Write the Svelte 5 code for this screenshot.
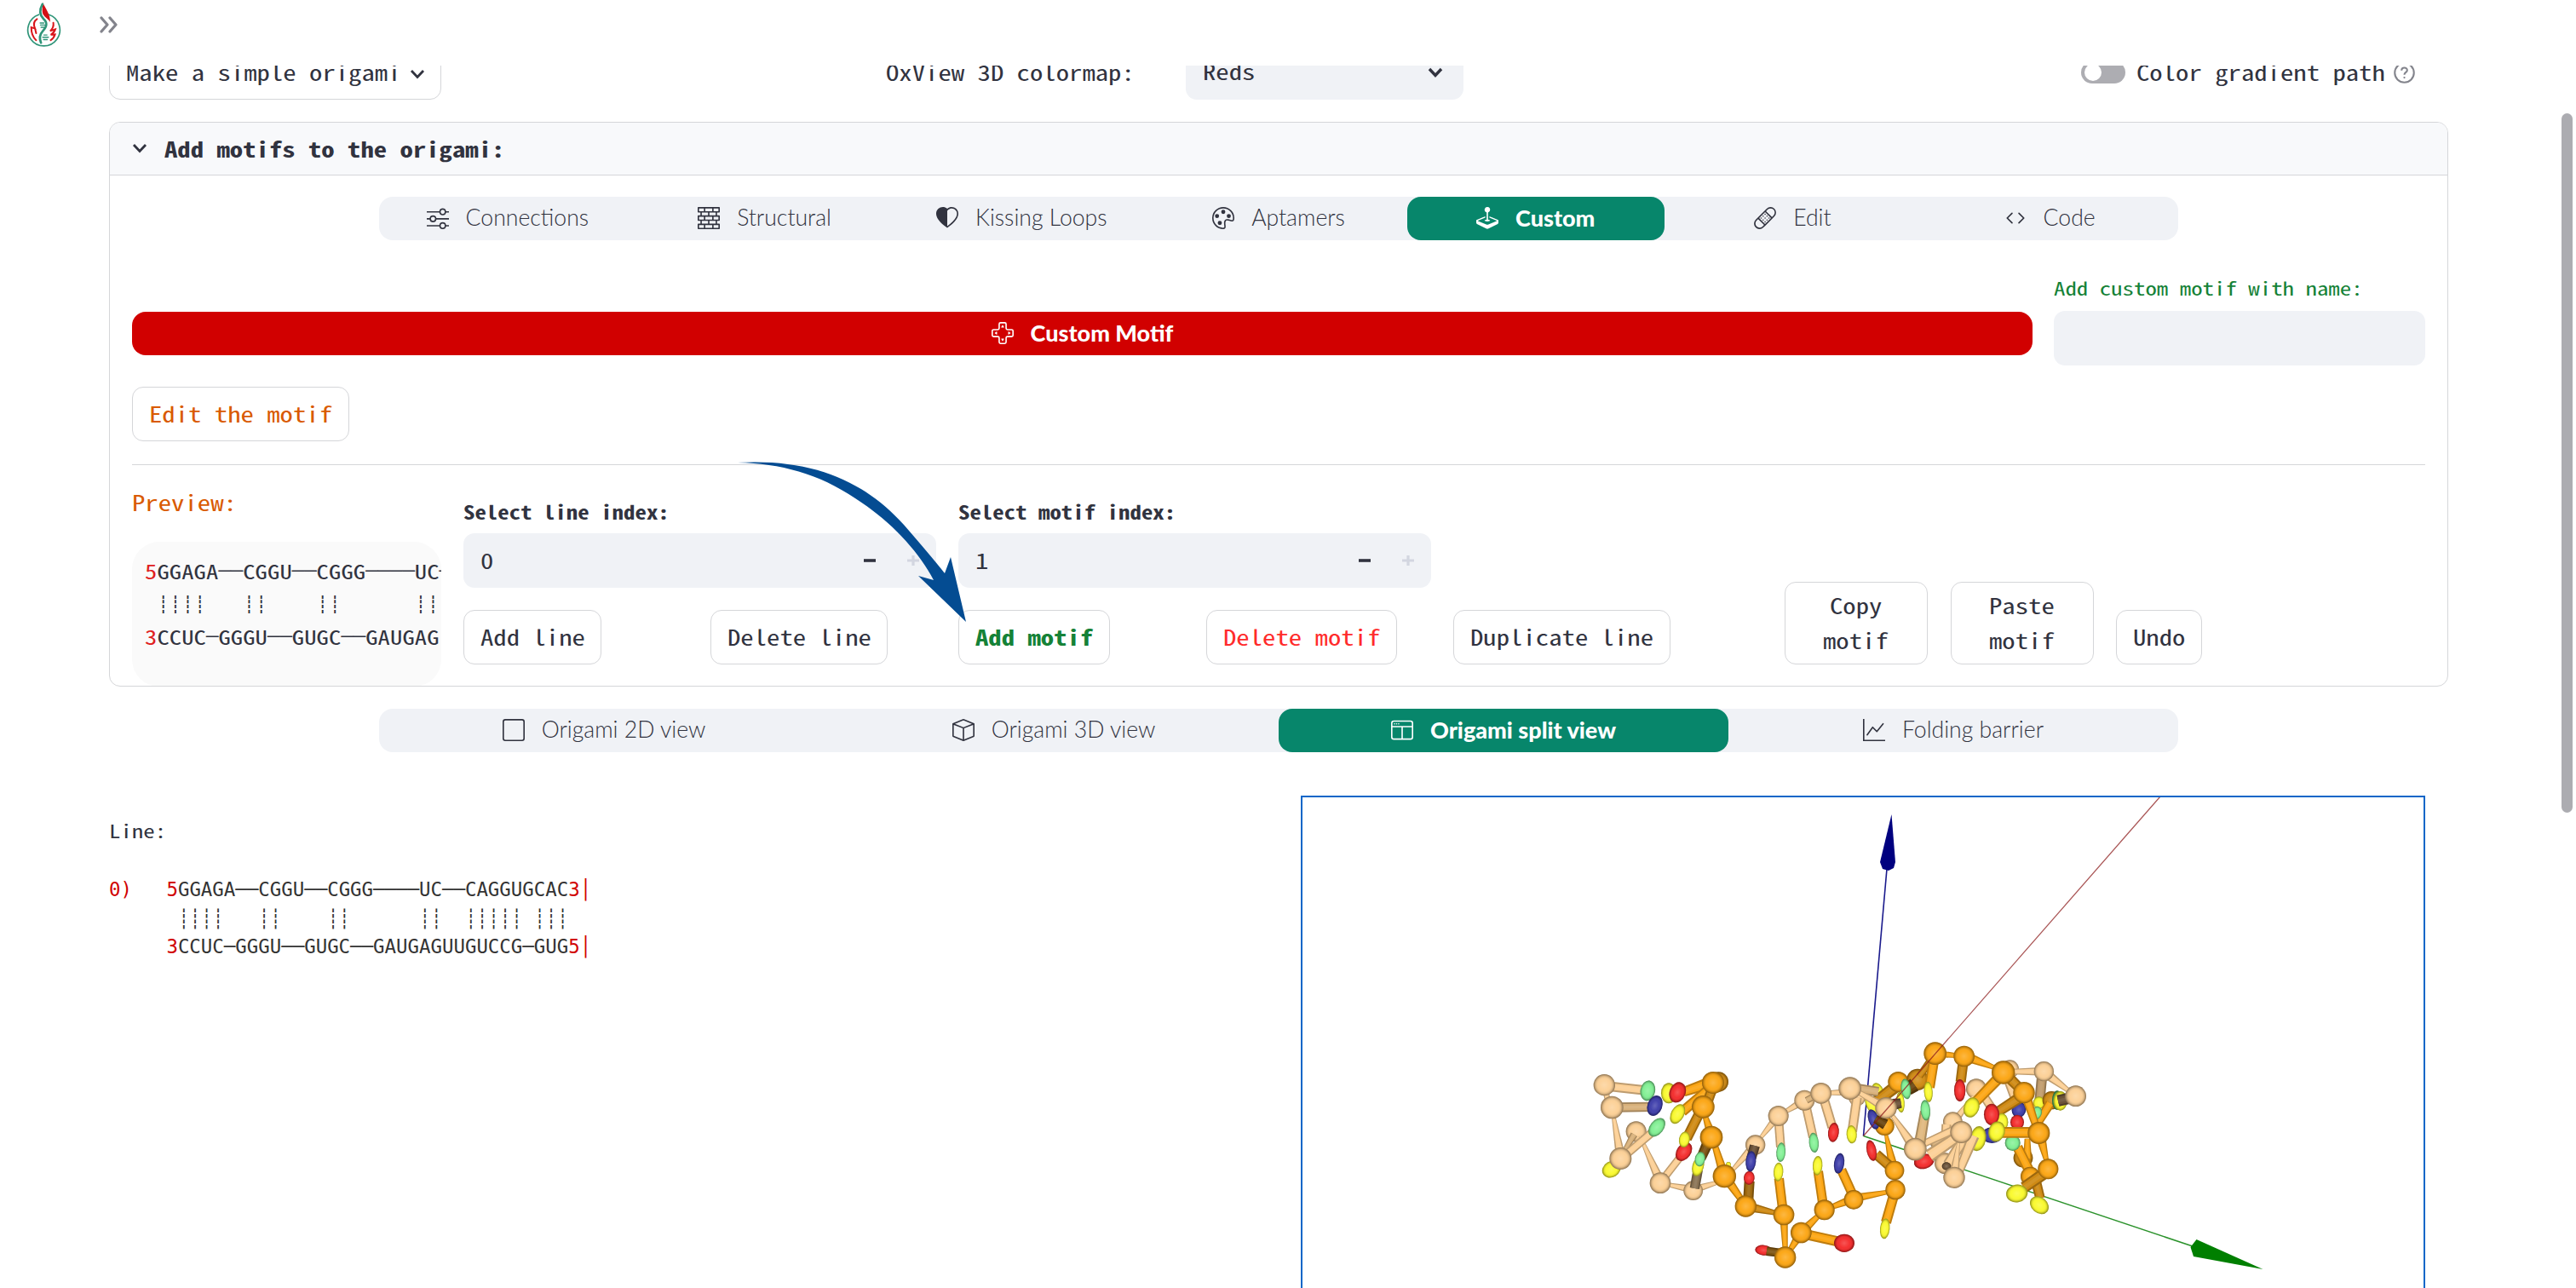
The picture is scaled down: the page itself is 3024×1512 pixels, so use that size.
<script>
  const icons = {
    sliders: ['M11.5 2a1.5 1.5 0 1 0 0 3 1.5 1.5 0 0 0 0-3M9.05 3a2.5 2.5 0 0 1 4.9 0H16v1h-2.05a2.5 2.5 0 0 1-4.9 0H0V3zM4.5 7a1.5 1.5 0 1 0 0 3 1.5 1.5 0 0 0 0-3M2.05 8a2.5 2.5 0 0 1 4.9 0H16v1H6.95a2.5 2.5 0 0 1-4.9 0H0V8zm9.45 4a1.5 1.5 0 1 0 0 3 1.5 1.5 0 0 0 0-3m-2.45 1a2.5 2.5 0 0 1 4.9 0H16v1h-2.05a2.5 2.5 0 0 1-4.9 0H0v-1z'],
    bricks: ['M0 .5A.5.5 0 0 1 .5 0h15a.5.5 0 0 1 .5.5v3a.5.5 0 0 1-.5.5H14v2h1.5a.5.5 0 0 1 .5.5v3a.5.5 0 0 1-.5.5H14v2h1.5a.5.5 0 0 1 .5.5v3a.5.5 0 0 1-.5.5H.5a.5.5 0 0 1-.5-.5v-3a.5.5 0 0 1 .5-.5H2v-2H.5a.5.5 0 0 1-.5-.5v-3A.5.5 0 0 1 .5 6H2V4H.5a.5.5 0 0 1-.5-.5zM3 4v2h4.5V4zm5.5 0v2H13V4zM3 10v2h4.5v-2zm5.5 0v2H13v-2zM1 1v2h3.5V1zm4.5 0v2h5V1zm6 0v2H15V1zM1 7v2h3.5V7zm4.5 0v2h5V7zm6 0v2H15V7zM1 13v2h3.5v-2zm4.5 0v2h5v-2zm6 0v2H15v-2z'],
    heart: ['M8 2.748v11.047c3.452-2.368 5.365-4.542 6.286-6.357.955-1.886.838-3.362.314-4.385C13.486.878 10.4.28 8.717 2.01zM8 15C-7.333 4.868 3.279-3.04 7.824 1.143q.09.083.176.171a3 3 0 0 1 .176-.17C12.72-3.042 23.333 4.867 8 15'],
    palette: ['M8 5a1.5 1.5 0 1 0 0-3 1.5 1.5 0 0 0 0 3m4 3a1.5 1.5 0 1 0 0-3 1.5 1.5 0 0 0 0 3M5 6.5a1.5 1.5 0 1 1-3 0 1.5 1.5 0 0 1 3 0m.5 6.5a1.5 1.5 0 1 0 0-3 1.5 1.5 0 0 0 0 3', 'M16 8c0 3.15-1.866 2.585-3.567 2.07C11.42 9.763 10.465 9.473 10 10c-.603.683-.475 1.819-.351 2.92C9.826 14.495 9.996 16 8 16a8 8 0 1 1 8-8m-8 7c.611 0 .654-.171.655-.176.078-.146.124-.464.07-1.119-.014-.168-.037-.37-.061-.591-.052-.464-.112-1.005-.118-1.462-.01-.707.083-1.61.704-2.314.369-.417.845-.578 1.272-.618.404-.038.812.026 1.16.104.343.077.702.186 1.025.284l.028.008c.346.105.658.199.953.266.653.148.904.083.991.024C14.717 9.38 15 9.161 15 8a7 7 0 1 0-7 7'],
    joystick: ['M10 2a2 2 0 0 1-1.5 1.937v5.087c.863.083 1.5.377 1.5.726 0 .414-.895.75-2 .75s-2-.336-2-.75c0-.35.637-.643 1.5-.726V3.937A2 2 0 1 1 10 2', 'M0 9.665v1.717a1 1 0 0 0 .553.894l6.553 3.277a2 2 0 0 0 1.788 0l6.553-3.277a1 1 0 0 0 .553-.894V9.665c0-.1-.06-.19-.152-.23L9.5 6.715v.993l5.227 2.178a.125.125 0 0 1 .001.23l-5.94 2.546a2 2 0 0 1-1.576 0l-5.94-2.546a.125.125 0 0 1 .001-.23L6.5 7.708l-.013-.988L.152 9.435a.25.25 0 0 0-.152.23'],
    bandaid: ['M14.121 1.879a3 3 0 0 0-4.242 0L8.733 3.026l4.261 4.26 1.127-1.165a3 3 0 0 0 0-4.242M12.293 8 8.027 3.734 3.738 8.031 8 12.293zm-5.006 4.994L3.03 8.737 1.879 9.88a3 3 0 0 0 4.241 4.24l.006-.006 1.16-1.121ZM2.679 7.676l6.492-6.504a4 4 0 0 1 5.66 5.653l-1.477 1.529-5.006 5.006-1.523 1.472a4 4 0 0 1-5.653-5.66l.001-.002 1.505-1.492z', ...[[5.2, 8], [6.62, 6.6], [8.03, 5.2], [6.62, 9.4], [8.03, 8], [9.45, 6.6], [8.03, 10.8], [9.45, 9.4], [10.86, 8]].map(([x, y]) => `M${x - 0.5} ${y}a.5.5 0 1 0 1 0 .5.5 0 1 0-1 0`)],
    code: ['M5.854 4.854a.5.5 0 1 0-.708-.708l-3.5 3.5a.5.5 0 0 0 0 .708l3.5 3.5a.5.5 0 0 0 .708-.708L2.707 8zm4.292 0a.5.5 0 0 1 .708-.708l3.5 3.5a.5.5 0 0 1 0 .708l-3.5 3.5a.5.5 0 0 1-.708-.708L13.293 8z'],
    box: ['M8.186 1.113a.5.5 0 0 0-.372 0L1.846 3.5 8 5.961 14.154 3.5zM15 4.239l-6.5 2.6v7.922l6.5-2.6V4.24zM7.5 14.762V6.838L1 4.239v7.923zM7.443.184a1.5 1.5 0 0 1 1.114 0l7.129 2.852A.5.5 0 0 1 16 3.5v8.662a1 1 0 0 1-.629.928l-7.185 2.874a.5.5 0 0 1-.372 0L.63 13.09a1 1 0 0 1-.63-.928V3.5a.5.5 0 0 1 .314-.464z'],
    square: ['M14 1a1 1 0 0 1 1 1v12a1 1 0 0 1-1 1H2a1 1 0 0 1-1-1V2a1 1 0 0 1 1-1zM2 0a2 2 0 0 0-2 2v12a2 2 0 0 0 2 2h12a2 2 0 0 0 2-2V2a2 2 0 0 0-2-2z'],
    split: ['M2.5 4a.5.5 0 1 0 0-1 .5.5 0 0 0 0 1m2-.5a.5.5 0 1 1-1 0 .5.5 0 0 1 1 0m1 .5a.5.5 0 1 0 0-1 .5.5 0 0 0 0 1', 'M2 1a2 2 0 0 0-2 2v10a2 2 0 0 0 2 2h12a2 2 0 0 0 2-2V3a2 2 0 0 0-2-2zm12 1a1 1 0 0 1 1 1v2H1V3a1 1 0 0 1 1-1zM1 13V6h6.5v8H2a1 1 0 0 1-1-1m7.5 1V6H15v7a1 1 0 0 1-1 1z'],
    graph: ['M0 0h1v15h15v1H0zm14.817 3.113a.5.5 0 0 1 .07.704l-4.5 5.5a.5.5 0 0 1-.74.037L7.06 6.767l-3.656 5.027a.5.5 0 0 1-.808-.588l4-5.5a.5.5 0 0 1 .758-.06l2.609 2.61 4.15-5.073a.5.5 0 0 1 .704-.07'],
    dpad: ['M7.79 2.34 6.99 3.62A.25.25 0 0 0 7.2 4h1.6a.25.25 0 0 0 .21-.38l-.8-1.28a.25.25 0 0 0-.42 0M7.79 13.66l-.8-1.28A.25.25 0 0 1 7.2 12h1.6a.25.25 0 0 1 .21.38l-.8 1.28a.25.25 0 0 1-.42 0M2.34 8.21l1.28.8A.25.25 0 0 0 4 8.8V7.2a.25.25 0 0 0-.38-.21l-1.28.8a.25.25 0 0 0 0 .42M13.66 8.21l-1.28.8A.25.25 0 0 1 12 8.8V7.2a.25.25 0 0 1 .38-.21l1.28.8a.25.25 0 0 1 0 .42']
  };

  const motifTabs = [
    ['sliders', 'Connections'], ['bricks', 'Structural'], ['heart', 'Kissing Loops'], ['palette', 'Aptamers'],
    ['joystick', 'Custom'], ['bandaid', 'Edit'], ['code', 'Code']
  ];
  const viewTabs = [
    ['square', 'Origami 2D view'], ['box', 'Origami 3D view'], ['split', 'Origami split view'], ['graph', 'Folding barrier']
  ];
  const actions = [
    ['Add line', ''], ['Delete line', ''], ['Add motif', 'green'], ['Delete motif', 'red'],
    ['Duplicate line', ''], ['Copy motif', 'tall'], ['Paste motif', 'tall'], ['Undo', '']
  ];
  const inputs = [['Select line index:', '0'], ['Select motif index:', '1']];

  const preview = [
    '5GGAGA──CGGU──CGGG────UC─',
    ' ┊┊┊┊   ┊┊    ┊┊      ┊┊',
    '3CCUC─GGGU──GUGC──GAUGAG'
  ];
  const strand = [
    '0)   5GGAGA──CGGU──CGGG────UC──CAGGUGCAC3│',
    '      ┊┊┊┊   ┊┊    ┊┊      ┊┊  ┊┊┊┊┊ ┊┊┊',
    '     3CCUC─GGGU──GUGC──GAUGAGUUGUCCG─GUG5│'
  ];
  // Runs of digits and end bars are highlighted, everything else is plain.
  const runs = (line) => line.match(/[0-9)│]+|[^0-9)│]+/g);
  const cell = (ch) => ('─┊'.includes(ch) ? 'rule' : /[0-9]/.test(ch) ? 'end' : '');

  // Molecule parts, back to front.
  // s: tapered stick (x1 y1 w1 x2 y2 w2 fill), b: ball (x y r fill), e: base ellipse (x y rx ry angle fill)
  const C = { O: '#fca614', o: '#cf8a14', d: '#7d5413', T: '#fcd096', t: '#d8b17b', k: '#6b5238', Y: '#fafa2e', G: '#82f094', R: '#f42c2c', B: '#3e3eaa' };
  const leftParts = `s 100 220 24 115 290 18 T|s 110 225 34 245 240 34 T|e 253 241 26 36 10 G|s 130 300 34 265 298 34 t|e 278 294 26 37 20 B|b 100 221 38 T|b 212 385 36 T
s 205 395 26 160 470 12 t|s 225 400 10 297 560 34 T|s 133 335 14 157 470 34 T|e 125 518 34 28 -30 Y|s 160 480 30 275 382 30 T|e 285 370 24 37 38 G|b 127 300 40 T|b 157 480 39 T
s 297 567 10 415 590 28 T|s 297 565 28 375 465 28 T|e 380 456 25 36 35 R|b 297 566 37 T|s 413 590 28 530 555 10 T|b 413 593 34 T|s 418 585 34 430 520 34 #8a7355|e 430 508 20 35 15 Y
s 525 550 8 632 430 32 T|e 537 504 9 12 0 Y|b 502 210 35 o|e 327 250 27 36 0 Y|s 490 208 46 380 245 34 O|e 358 247 28 37 22 R|s 480 225 36 375 315 36 O|e 358 323 23 37 28 Y|s 487 215 36 460 290 36 o|b 483 213 39 O
s 440 310 36 390 410 36 o|e 382 413 19 28 10 Y|s 448 310 14 478 400 34 O|b 448 298 40 O|s 462 430 38 440 480 34 d|e 437 482 18 26 10 G|s 485 420 20 522 540 34 O|b 477 405 40 O|s 530 550 34 600 650 20 O|b 523 542 41 O
s 606 640 36 611 560 36 #a06a10|e 610 548 19 24 5 R|s 600 648 36 732 678 12 o|b 598 648 38 O|s 729 665 34 715 550 34 O|e 713 527 17 33 4 Y|s 732 690 28 738 820 16 O|b 732 678 37 O
e 661 803 30 18 5 R|s 738 815 30 672 806 32 d|s 738 828 12 793 741 34 O|b 737 828 38 O|s 800 745 36 922 772 36 O|e 945 778 36 32 0 R|s 793 741 34 873 663 14 O|b 793 741 37 O
s 872 655 34 853 525 34 O|e 851 505 17 34 4 Y|s 875 660 14 978 622 32 O|b 875 661 36 O|s 978 615 34 935 520 34 O|e 927 497 18 36 8 B|s 978 620 30 1125 593 12 O|b 978 625 34 O|s 1122 600 36 1092 705 36 O|e 1088 727 17 36 6 Y
s 1092 395 12 1115 500 32 O|s 1120 520 36 1058 465 36 o|e 1041 452 17 37 -12 R|b 1122 522 34 O|b 1125 590 35 O
s 632 430 8 712 330 30 T|b 632 432 35 T|s 630 435 36 618 478 34 k|e 616 490 18 36 5 B|s 713 335 32 721 440 32 T|e 722 458 16 34 4 G|s 713 330 10 805 275 30 T|b 713 330 36 T|s 808 285 32 835 405 32 T|e 838 424 17 35 -5 G|b 805 275 36 T|s 812 275 24 850 255 24 t
s 870 260 34 903 370 34 T|e 907 388 19 34 6 R|s 863 250 12 960 246 26 T|b 863 250 37 T|b 990 265 30 T|s 990 265 34 973 385 34 T|e 971 395 18 32 -4 Y`;
  const rightParts = `e 165 308 20 36 -20 Y|s 235 280 44 150 345 40 o|b 235 270 36 O|b 303 262 38 o|s 292 280 50 268 297 44 #6a4510|e 262 295 17 36 -8 G|e 140 350 18 36 -25 Y|b 187 425 34 O|e 148 402 18 36 -18 B|s 155 400 30 190 420 38 #6a4510|e 243 342 14 36 -5 Y
s 70 290 34 165 305 34 t|s 70 292 14 192 362 34 T|s 215 350 40 245 345 34 k|s 310 250 24 360 180 28 o|s 362 185 36 345 290 36 O|e 341 305 15 36 -4 Y|s 365 170 26 465 180 14 O|s 465 190 36 455 270 36 o|e 452 300 20 39 0 R|s 467 178 38 600 230 10 O|b 365 170 40 O|b 467 180 37 O
b 510 295 36 T|s 500 320 10 440 400 26 T|s 530 310 32 568 368 32 T|b 628 225 32 T|s 620 255 34 655 350 34 T|e 660 368 25 28 20 B|s 640 234 20 745 233 30 T|s 742 245 36 733 338 36 #c09c6c|e 731 344 21 22 0 Y|s 748 235 38 860 320 10 T|b 748 233 35 T
b 775 335 32 o|s 770 345 34 712 440 26 O|e 722 380 18 24 20 G|e 795 335 18 34 0 #43a25a|e 806 337 24 34 0 Y|s 798 337 40 850 325 40 k|b 860 320 37 T
s 600 245 40 508 340 36 O|s 607 237 40 678 308 34 o|e 493 360 27 36 20 Y|b 605 237 41 O|s 672 320 40 582 378 36 o|e 600 412 22 32 0 Y|e 564 385 27 38 0 R|s 685 320 34 725 440 24 O|b 678 308 38 O
e 654 412 24 26 0 R|e 565 458 36 28 0 B|b 675 538 34 o|s 690 470 20 690 540 30 O|s 655 500 36 700 590 36 O|e 638 485 27 28 0 G|s 738 470 34 760 560 14 O|s 730 448 38 600 448 38 O|e 582 445 29 36 15 Y|b 730 450 39 O
s 715 600 36 735 680 34 o|e 732 704 36 28 40 Y|b 700 603 34 O|s 760 585 42 678 642 40 o|e 653 663 38 31 -10 Y|b 763 577 36 O
e 326 550 36 26 -15 R|e 516 470 28 44 10 Y|b 427 410 34 T|s 405 420 34 400 475 30 T|b 375 482 28 t|b 400 557 37 T|s 410 560 36 480 450 40 T|e 405 567 16 14 0 k|s 500 460 42 450 585 30 T|s 320 490 26 450 430 30 T|s 345 530 46 455 455 38 T|s 447 485 10 432 600 36 T|b 457 447 39 T|b 432 607 38 T
s 310 490 40 330 375 36 #e0b87e|e 331 370 17 36 -5 G|s 205 375 12 290 500 38 T|b 295 507 40 T|b 192 362 38 T|b 65 293 40 T`;

  function build(src) {
    return src.split(/[|\n]/).map((row) => {
      const p = row.trim().split(' ');
      const n = p.slice(1, -1).map(Number);
      const key = p[p.length - 1];
      const fill = C[key] ?? key;
      if (p[0] === 's') {
        const [x1, y1, w1, x2, y2, w2] = n;
        const len = Math.hypot(x2 - x1, y2 - y1);
        const nx = -(y2 - y1) / len, ny = (x2 - x1) / len;
        const quad = (k) => [[x1, y1, w1], [x2, y2, w2], [x2, y2, -w2], [x1, y1, -w1]]
          .map(([x, y, w]) => `${x + (nx * w * k) / 2},${y + (ny * w * k) / 2}`).join(' ');
        return { kind: 's', fill, outer: quad(1), inner: quad(0.68), core: quad(0.3) };
      }
      if (p[0] === 'b') return { kind: 'e', fill, x: n[0], y: n[1], rx: n[2], ry: n[2], a: 0 };
      return { kind: 'e', fill, x: n[0], y: n[1], rx: n[2], ry: n[3], a: n[4] };
    });
  }
  const left = build(leftParts);
  const right = build(rightParts);
</script>

{#snippet icon(name)}
  <svg class="icon" viewBox="0 0 16 16" fill="currentColor">
    {#each icons[name] as d}<path {d} />{/each}
    {#if name === 'dpad'}
      <path fill="none" stroke="currentColor" d="M6.5.5h3a1 1 0 0 1 1 1v3a1 1 0 0 0 1 1h3a1 1 0 0 1 1 1v3a1 1 0 0 1-1 1h-3a1 1 0 0 0-1 1v3a1 1 0 0 1-1 1h-3a1 1 0 0 1-1-1v-3a1 1 0 0 0-1-1h-3a1 1 0 0 1-1-1v-3a1 1 0 0 1 1-1h3a1 1 0 0 0 1-1v-3a1 1 0 0 1 1-1z" />
    {/if}
  </svg>
{/snippet}

{#snippet chevron()}
  <svg class="chev" viewBox="0 0 18 12"><path d="M2 2l7 7.5L16 2" /></svg>
{/snippet}

<!-- Half-width mono glyphs widened to a roomier pitch; the box keeps the widened width. -->
{#snippet mono(text)}<span class="mono" style="--n: {text.length}"><span>{text}</span></span>{/snippet}

{#snippet parts(list)}
  {#each list as p}
    {#if p.kind === 's'}
      <polygon points={p.outer} fill={p.fill} />
      <polygon points={p.outer} fill="#000" opacity=".25" />
      <polygon points={p.inner} fill={p.fill} />
      <polygon points={p.core} fill="#fff" opacity=".08" />
    {:else}
      <g transform="translate({p.x} {p.y}) rotate({p.a})">
        <ellipse rx={p.rx} ry={p.ry} fill={p.fill} />
        <ellipse rx={p.rx} ry={p.ry} fill="url(#shade)" />
      </g>
    {/if}
  {/each}
{/snippet}

<div class="page">
  <header>
    <svg class="logo" viewBox="64 6 122 160" fill="none" stroke-linecap="round">
      <path d="M107 51A56 56 0 1 0 143 51" stroke="#2f9478" stroke-width="5" />
      <path d="M121 9c11 22 27 42 26 68-6-11-24-18-27-34-2-13 2-22 1-34z" fill="#d40f14" />
      <path d="M120 14c-12 22-10 38 4 52 16 15 11 27-2 41-12 13-14 26-7 42" stroke="#2f9478" stroke-width="8" />
      <path d="M112 80h13M113 87h17M115 95h11M125 122h11M121 130h20M124 138h13" stroke="#2f9478" stroke-width="4" />
      <path d="M101 66c-11 7-13 19-7 33l-13-4c0 20 4 34 17 45M94 99l4 17M158 79c2 12-3 22-11 29l18-6c-4 12-9 15-16 19l15-1c-3 9-8 16-15 20" stroke="#d9161b" stroke-width="6" />
    </svg>
    <svg class="expand" viewBox="0 0 22 20"><path d="M2 2l7 8-7 8M12 2l7 8-7 8" /></svg>
  </header>

  <main>
    <div class="top-row">
      <div class="btn">{@render mono('Make a simple origami')}{@render chevron()}</div>
      {@render mono('OxView 3D colormap:')}
      <div class="select">{@render mono('Reds')}{@render chevron()}</div>
      <div class="toggle-row">
        <span class="toggle"><i></i></span>
        {@render mono('Color gradient path')}
        <svg class="help" viewBox="0 0 24 24"><circle cx="12" cy="12" r="10.8" /><path d="M8.8 9.3c.2-4 6.4-4 6.4-.3 0 2.400-3.200 2.400-3.200 5.200" /><circle class="dot" cx="12" cy="17.300" r="1.100" /></svg>
      </div>
    </div>

    <section class="expander">
      <div class="summary">{@render chevron()}<b>{@render mono('Add motifs to the origami:')}</b></div>
      <div class="body">
        <nav class="tabs seven">
          {#each motifTabs as [ic, label]}
            <div class="tab" class:active={label === 'Custom'}>{@render icon(ic)}<span>{label}</span></div>
          {/each}
        </nav>

        <div class="name-row">
          <div class="custom">{@render icon('dpad')}<span>Custom Motif</span></div>
          <div class="name"><div class="name-label">{@render mono('Add custom motif with name:')}</div><div class="field"></div></div>
        </div>

        <div class="btn orange">{@render mono('Edit the motif')}</div>
        <div class="divider"></div>

        <div class="lower">
          <div class="preview">
            <div class="preview-title">{@render mono('Preview:')}</div>
            <div class="preview-box">
              {#each preview as line}
                <div class="cells">{#each [...line] as ch}<span class={cell(ch)}>{ch}</span>{/each}</div>
              {/each}
            </div>
          </div>
          <div class="controls">
            <div class="inputs">
              {#each inputs as [label, value]}
                <div>
                  <div class="label">{@render mono(label)}</div>
                  <div class="field number">
                    <div class="value">{@render mono(value)}</div>
                    <svg class="minus" viewBox="0 0 14 14"><path d="M0 7h14" /></svg>
                    <svg class="plus" viewBox="0 0 14 14"><path d="M0 7h14M7 1v12" /></svg>
                  </div>
                </div>
              {/each}
            </div>
            <div class="actions">
              {#each actions as [label, kind]}
                <div class="btn {kind}">
                  {#if kind === 'tall'}
                    {#each label.split(' ') as word}{@render mono(word)}{/each}
                  {:else}
                    {@render mono(label)}
                  {/if}
                </div>
              {/each}
            </div>
          </div>
        </div>
      </div>
    </section>

    <nav class="tabs four">
      {#each viewTabs as [ic, label]}
        <div class="tab" class:active={label === 'Origami split view'}>{@render icon(ic)}<span>{label}</span></div>
      {/each}
    </nav>

    <div class="views">
      <div class="text-view">
        <div class="line-title">{@render mono('Line:')}</div>
        {#each strand as line}
          <div class="strand">{#each runs(line) as run}<span class:end={/[0-9]/.test(run)}>{run}</span>{/each}</div>
        {/each}
      </div>
      <div class="scene">
        <svg viewBox="1529 936 1316 576">
          <defs>
            <radialGradient id="shade" cx=".5" cy=".5" r=".5">
              <stop offset="0" stop-color="#fff" stop-opacity=".2" />
              <stop offset=".55" stop-color="#fff" stop-opacity=".02" />
              <stop offset=".8" stop-color="#000" stop-opacity=".12" />
              <stop offset="1" stop-color="#000" stop-opacity=".45" />
            </radialGradient>
          </defs>
          <path d="M2187.500 1333.500L2215 1020" stroke="#1a1a8c" stroke-width="1.600" />
          <path d="M2187.500 1333.500L2574 1463" stroke="#2c932c" stroke-width="1.600" />
          <path d="M2220.500 956l4.500 56-2 7-6 3-7-2-3-8z" fill="#00007f" />
          <path d="M2656.500 1490l-78-35-7 9 3.500 11z" fill="#007f00" />
          <g transform="translate(1850 1200) scale(.33333)">{@render parts(left)}</g>
          <g transform="translate(2150 1180) scale(.33333)">{@render parts(right)}</g>
          <path d="M2187.500 1333.500L2536 935" stroke="#8c1a1a" stroke-width="1.300" opacity=".75" />
        </svg>
      </div>
    </div>
  </main>

  <svg class="pointer" viewBox="0 0 270 190"><path d="M0 1C90-4 150 24 195 74Q228 112 243 131L250 112L268 188L212 134L230 139C212 105 180 70 138 43C95 14 50 2 0 1z" /></svg>
  <div class="scrollbar"></div>
</div>

<style>
  :global(body) { background: #fff; overflow: hidden; }
  .page {
    position: relative; width: 3024px; height: 1512px; overflow: hidden; background: #fff; color: #31333f;
    font-family: 'Noto Sans Mono CJK SC', 'Liberation Mono', monospace; font-size: 25px;
    display: flex; flex-direction: column;
  }
  .mono { display: block; width: calc(var(--n) * .6144em); line-height: 38px; padding-bottom: 2px; white-space: pre; }
  .mono > span { display: inline-block; transform: scaleX(1.2288); transform-origin: 0 50%; }
  header { height: 77px; flex: none; display: flex; align-items: flex-start; padding: 2px 0 0 31px; box-sizing: border-box; }
  .logo { width: 41px; height: 54px; }
  .expand { width: 22px; height: 20px; margin: 17px 0 0 45px; fill: none; stroke: #83848c; stroke-width: 3.2; stroke-linecap: round; stroke-linejoin: round; }
  main { flex: 1; min-height: 0; overflow: hidden; padding: 0 150px 0 128px; }
  .chev { width: 18px; height: 12px; fill: none; stroke: currentColor; stroke-width: 2.8; flex: none; }

  .btn {
    box-sizing: border-box; min-height: 64px; border: 1px solid #d5d6d9; border-radius: 13px; background: #fff;
    padding: 0 19px; display: flex; align-items: center; width: max-content;
  }
  .top-row { margin-top: -24px; height: 64px; display: grid; grid-template-columns: 912px 352px 1051px auto; align-items: center; }
  .top-row .btn { width: 390px; justify-content: space-between; padding-right: 18px; }
  .top-row .btn .chev { margin-top: 4px; }
  .select { width: 326px; height: 64px; box-sizing: border-box; border-radius: 13px; background: #f0f2f6; display: flex; align-items: center; justify-content: space-between; padding: 0 24px 0 20px; }
  .select .mono { margin-top: -2px; }
  .select .chev { stroke-width: 3.4; }
  .toggle-row { display: flex; align-items: center; }
  .toggle { width: 52px; height: 26px; border-radius: 13px; background: #adadb2; margin-right: 13px; display: flex; align-items: center; }
  .toggle i { width: 20px; height: 20px; border-radius: 50%; background: #fff; margin-left: 4px; }
  .help { width: 25px; height: 25px; margin-left: 10px; fill: none; stroke: #83848c; stroke-width: 2; }
  .help .dot { fill: #83848c; stroke: none; }

  .expander { margin-top: 26px; box-sizing: border-box; height: 663px; border: 1px solid #d5d6d9; border-radius: 13px; overflow: hidden; }
  .summary { height: 61px; border-bottom: 1px solid #d5d6d9; background: #f8f9fb; display: flex; align-items: center; padding-left: 26px; gap: 20px; }
  .summary .chev { margin-top: -2px; }
  b { font-weight: 700; }
  .body { padding: 25px 26px 0; }

  .tabs { width: 2112px; height: 51px; margin: 0 auto; border-radius: 16px; background: #f0f2f6; display: grid; font-family: Lato, sans-serif; font-size: 26.6px; }
  .seven { grid-template-columns: repeat(7, 1fr); }
  .four { grid-template-columns: repeat(4, 1fr); margin: 26px 0 0 317px; }
  .tab { display: flex; align-items: center; justify-content: center; gap: 20px; border-radius: 16px; font-weight: 300; }
  .tab span, .custom span { padding-bottom: 3px; }
  .tab.active { background: #07866b; color: #fff; font-weight: 900; font-size: 27px; }
  .icon { width: 26px; height: 26px; flex: none; margin-top: -2px; }

  .name-row { display: grid; grid-template-columns: 2231px 436px; gap: 25px; margin-top: 41px; height: 106px; }
  .custom { margin-top: 43px; height: 51px; border-radius: 16px; background: #d10000; color: #fff; display: flex; align-items: center; justify-content: center; gap: 20px; font: 900 27px Lato, sans-serif; }
  .name { display: flex; flex-direction: column; }
  .name-label { height: 42px; font-size: 21.875px; color: #158237; }
  .name-label .mono, .label .mono { line-height: 30px; padding: 0; }
  .field { height: 64px; border-radius: 13px; background: #f0f2f6; }
  .orange { color: #d95a00; margin-top: 25px; }
  .divider { height: 1px; background: #d5d6d9; margin-top: 27px; }

  .lower { display: flex; gap: 25.5px; }
  .preview { width: 363px; flex: none; }
  .preview-title { color: #d95a00; padding-top: 24px; height: 66px; }
  .preview-box { height: 170px; box-sizing: border-box; background: #fafafa; border-radius: 32px; overflow: hidden; padding: 15px 0 0 15px; font-size: 23.2px; }
  .cells { display: flex; height: 38.5px; line-height: 38.5px; white-space: pre; width: 280px; transform: scaleX(1.2288); transform-origin: 0 50%; }
  .cells span { width: 11.72px; flex: none; }
  .cells .end { color: #e02020; }
  .cells .rule { font-family: 'DejaVu Sans Mono', monospace; font-size: 19.5px; padding-top: 1px; }

  .inputs { display: flex; gap: 26px; padding-top: 40px; }
  .inputs > div { width: 555px; }
  .label { font-size: 21.875px; font-weight: 700; height: 40px; }
  .number { display: flex; align-items: center; padding: 0 20px; }
  .value { flex: 1; }
  .minus, .plus { width: 14px; height: 14px; fill: none; stroke-width: 3.6; stroke: #31333f; }
  .plus { stroke: #d3d6e0; margin: 0 0 0 37px; stroke-width: 3.2; }
  .actions { display: grid; grid-template-columns: 290px 291px 291px 290px 389px 195px 194px auto; align-items: end; height: 97px; margin-top: -7px; }
  .green { color: #158237; font-weight: 700; }
  .red { color: #ff2b2b; }
  .tall { width: 168px; height: 97px; padding: 7px 0; flex-direction: column; justify-content: space-between; }

  .views { display: flex; height: 660px; }
  .text-view { width: 1399px; padding-top: 73px; box-sizing: border-box; }
  .line-title { height: 72px; font-size: 21.875px; }
  .strand { height: 33.5px; line-height: 33.5px; white-space: pre; color: #333; font-family: 'DejaVu Sans Mono', monospace; font-size: 22.4px; }
  .strand .end { color: #d10000; }
  .scene { box-sizing: border-box; width: 1320px; border: 2px solid #0a66c8; margin-top: 51px; }
  .scene svg { display: block; width: 1316px; height: 576px; }

  .pointer { position: absolute; left: 866px; top: 542px; width: 270px; height: 190px; fill: #044c92; }
  .scrollbar { position: absolute; left: 3007px; top: 133px; width: 13px; height: 821px; border-radius: 7px; background: #acacb1; }
</style>
